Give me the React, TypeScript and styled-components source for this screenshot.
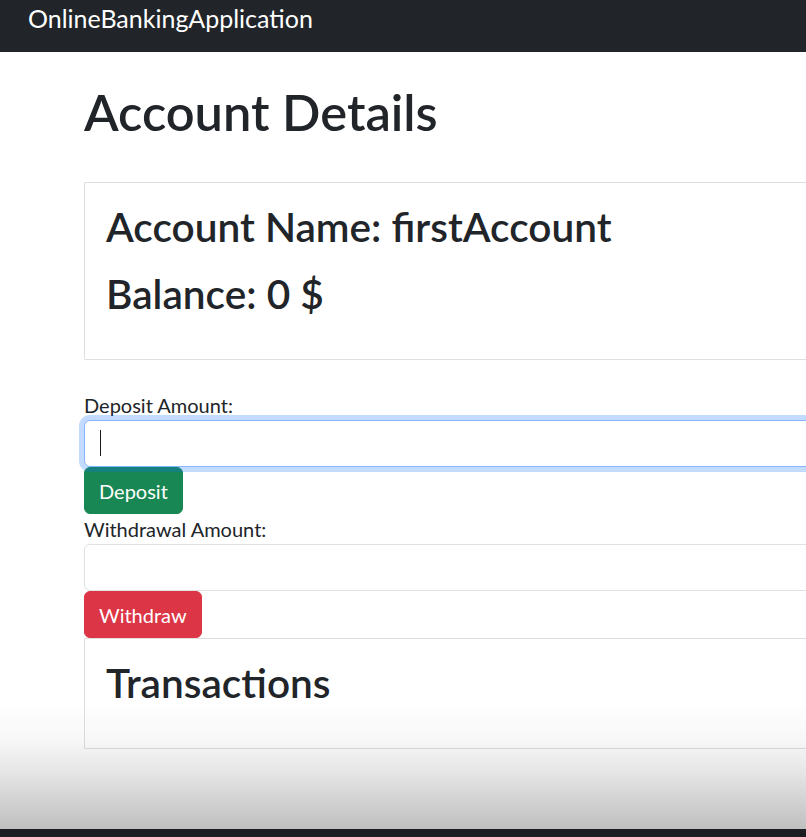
import {useState} from "react";
import styled, {createGlobalStyle} from "styled-components";

const GlobalStyle = createGlobalStyle`
  html, body {
    margin: 0;
    padding: 0;
    overflow: hidden;
    background: #fff;
  }

  body {
    font-family: Lato, "Open Sans", sans-serif;
    color: #212529;
    font-size: 20px;
    line-height: 1.5;
  }

  * {
    box-sizing: border-box;
  }
`

const Page = styled.div`
  width: 100%;
  height: 837px;
  position: relative;
  overflow: hidden;
`

const NavBar = styled.nav`
  height: 52px;
  background: #212529;
  display: flex;
  align-items: flex-start;
  padding-left: 28px;
`

const Brand = styled.span`
  color: #fff;
  font-size: 25px;
  line-height: 36px;
`

const Container = styled.main`
  margin-left: 84px;
  width: 1000px;
  padding-top: 30px;
`

const Title = styled.h1`
  font-size: 50.6px;
  font-weight: 600;
  line-height: 1.2;
  margin: 0 0 39px 0;
`

const Card = styled.section`
  border: 1px solid #dfdfdf;
  border-radius: 1px;
  padding: 20px 20px 21px 21px;
  margin-bottom: ${(props: {$gap?: number}) => props.$gap ?? 0}px;
`

const CardHeading = styled.h2`
  font-size: 40.6px;
  font-weight: 600;
  line-height: 1.2;
  margin: 0 0 19px 0;
`

const FieldLabel = styled.label`
  display: block;
  font-size: 20px;
  line-height: 30px;
`

const InputWrap = styled.div`
  position: relative;
`

const AmountInput = styled.input<{$focused?: boolean}>`
  display: block;
  width: 100%;
  height: 47px;
  padding: 7px 15px;
  font: inherit;
  color: #212529;
  background: #fff;
  border: 1px solid ${props => props.$focused ? "#86b7fe" : "#dee2e6"};
  border-radius: 6px;
  box-shadow: ${props => props.$focused ? "0 0 0 5px rgba(13, 110, 253, 0.25)" : "none"};
  outline: none;
  caret-color: transparent;
`

const Caret = styled.span`
  position: absolute;
  left: 16px;
  top: 10px;
  width: 1px;
  height: 26px;
  background: #1a1a1a;
`

const ActionButton = styled.button<{$tone: "success" | "danger"}>`
  display: inline-block;
  height: 47px;
  padding: 0 14px;
  font: inherit;
  font-size: 20px;
  color: #fff;
  background: ${props => props.$tone === "success" ? "#198754" : "#dc3545"};
  border: 1px solid ${props => props.$tone === "success" ? "#198754" : "#dc3545"};
  border-radius: 6px;
  cursor: pointer;
`

const ButtonRow = styled.div`
  display: flex;
`

const ScreenShade = styled.div`
  position: absolute;
  left: 0;
  right: 0;
  bottom: 0;
  height: 137px;
  pointer-events: none;
  background: linear-gradient(
    to bottom,
    rgba(0, 0, 0, 0) 0px,
    rgba(0, 0, 0, 0.03) 40px,
    rgba(0, 0, 0, 0.1) 73px,
    rgba(0, 0, 0, 0.25) 129px,
    #1c1d21 129px,
    #1c1d21 137px
  );
`

const App = () => {
    const [deposit, setDeposit] = useState("");
    const [withdrawal, setWithdrawal] = useState("");
    const [balance, setBalance] = useState(0);

    return (
        <Page>
            <GlobalStyle/>
            <NavBar>
                <Brand>OnlineBankingApplication</Brand>
            </NavBar>
            <Container>
                <Title>Account Details</Title>
                <Card $gap={30}>
                    <CardHeading>Account Name: firstAccount</CardHeading>
                    <CardHeading>Balance: {balance} $</CardHeading>
                </Card>

                <FieldLabel htmlFor="deposit">Deposit Amount:</FieldLabel>
                <InputWrap>
                    <AmountInput id="deposit" $focused value={deposit}
                                 onChange={e => setDeposit(e.target.value)}/>
                    {deposit === "" && <Caret/>}
                </InputWrap>
                <ButtonRow>
                    <ActionButton $tone="success" onClick={() => {
                        setBalance(balance + (Number(deposit) || 0));
                        setDeposit("");
                    }}>Deposit</ActionButton>
                </ButtonRow>

                <FieldLabel htmlFor="withdrawal">Withdrawal Amount:</FieldLabel>
                <AmountInput id="withdrawal" value={withdrawal}
                             onChange={e => setWithdrawal(e.target.value)}/>
                <ButtonRow>
                    <ActionButton $tone="danger" onClick={() => {
                        setBalance(balance - (Number(withdrawal) || 0));
                        setWithdrawal("");
                    }}>Withdraw</ActionButton>
                </ButtonRow>

                <Card>
                    <CardHeading>Transactions</CardHeading>
                </Card>
            </Container>
            <ScreenShade/>
        </Page>
    )
}

export default App;
